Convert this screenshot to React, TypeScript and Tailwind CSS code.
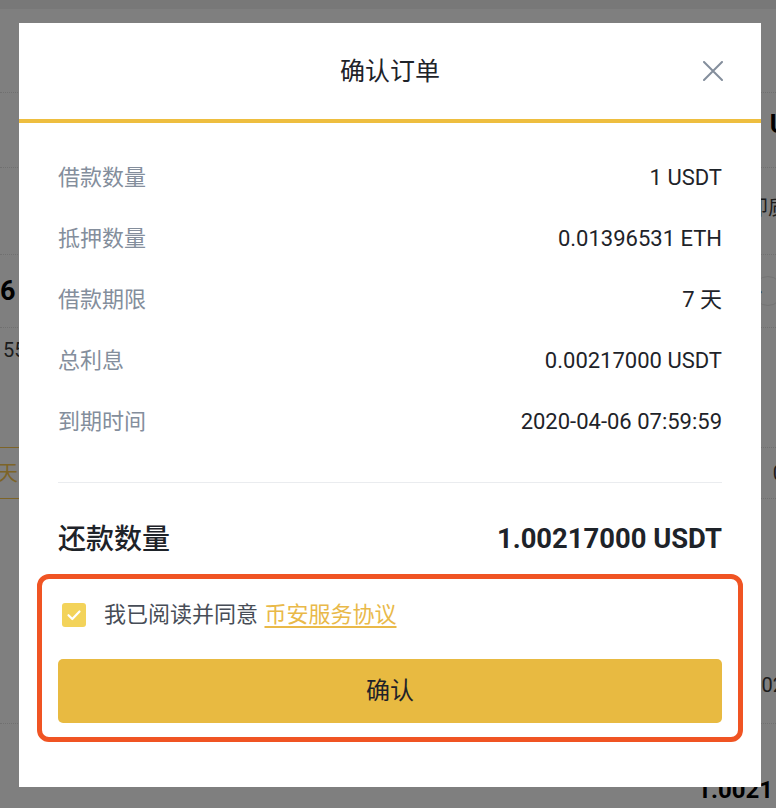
import React from "react";

const rows: { label: string; value: string }[] = [
  { label: "借款数量", value: "1 USDT" },
  { label: "抵押数量", value: "0.01396531 ETH" },
  { label: "借款期限", value: "7 天" },
  { label: "总利息", value: "0.00217000 USDT" },
  { label: "到期时间", value: "2020-04-06 07:59:59" },
];

function Background() {
  const line = "border-b border-dotted border-[#707070]";
  return (
    <div className="flex flex-col w-full">
      <div className="h-[9px] bg-[#787878]" />
      <div className={`h-[84px] ${line}`} />
      <div className={`h-[75px] ${line} flex items-center justify-end`}>
        <span className="text-[26px] font-bold text-black leading-none mr-[-11px] mt-[-12px]">U</span>
      </div>
      <div className={`h-[87px] ${line} flex items-center justify-end`}>
        <span className="text-[20px] text-[#1c1c1c] leading-none mr-[-12px] mt-[-6px]">即质</span>
      </div>
      <div className={`h-[73px] ${line} flex items-center justify-between`}>
        <span className="text-[27px] font-bold text-black leading-none ml-0">6</span>
        <div className="w-[30px] h-[30px] rounded-full border border-[#747474] mr-[-7px] flex items-center justify-start pl-[4px]">
          <span className="text-[14px] text-[#1a1a1a] leading-none">›</span>
        </div>
      </div>
      <div className="h-[119px] flex items-start justify-start">
        <span className="text-[20px] text-[#1c1c1c] leading-none ml-[3px] mt-[12px]">55</span>
      </div>
      <div className="h-[52px] border-y border-dotted border-[#707070] flex items-center justify-between">
        <div className="h-[52px] -my-px w-[40px] border-y border-[#7d6428] flex items-center">
          <span className="text-[21px] text-[#7d6428] leading-none ml-[-3px]">天</span>
        </div>
        <span className="text-[20px] text-[#1c1c1c] leading-none mr-[-8px]">0</span>
      </div>
      <div className={`h-[225px] ${line} flex items-end justify-end`}>
        <span className="text-[20px] text-[#1c1c1c] leading-none mr-[-8px] mb-[28px]">02</span>
      </div>
      <div className="h-[83px] flex items-start justify-end">
        <span className="text-[24px] font-bold text-black leading-none mr-[3px] mt-[54px]">1.0021</span>
      </div>
    </div>
  );
}

export default function App() {
  return (
    <div
      className="relative w-[776px] h-[808px] overflow-hidden bg-[#7f7f7f]"
      style={{ fontFamily: 'Roboto, "Noto Sans CJK SC", "Noto Sans", sans-serif' }}
    >
      <Background />

      <div className="absolute left-[19px] top-[23px] w-[742px] h-[764px] bg-white flex flex-col">
        <div className="h-[96px] grid grid-cols-[1fr_auto_1fr] items-center">
          <div />
          <div className="text-[25px] text-[#1e2329] leading-none">确认订单</div>
          <div className="flex justify-end pr-[38px]">
            <svg width="20" height="20" viewBox="0 0 20 20" fill="none">
              <path d="M1 1L19 19M19 1L1 19" stroke="#848e9c" strokeWidth="2" strokeLinecap="round" />
            </svg>
          </div>
        </div>
        <div className="h-[4px] bg-[#eebe3f]" />

        <div className="px-[39px] pt-[24px] flex flex-col">
          {rows.map((r) => (
            <div key={r.label} className="h-[61px] flex items-center justify-between">
              <span className="text-[22px] text-[#848e9c] leading-none">{r.label}</span>
              <span className="text-[22px] text-[#1e2329] leading-none">{r.value}</span>
            </div>
          ))}

          <div className="mt-[30px] h-px bg-[#eaecef]" />

          <div className="mt-[37px] h-[40px] flex items-center justify-between">
            <span className="text-[28px] font-medium text-[#1e2329] leading-none">还款数量</span>
            <span className="text-[27.4px] font-bold text-[#1e2329] leading-none">1.00217000 USDT</span>
          </div>

          <div className="mt-[14px] -mx-[21px] border-[5px] border-[#f05423] rounded-[12px] px-[16px] pt-[24px] pb-[14px] flex flex-col">
            <div className="h-[24px] flex items-center">
              <div className="ml-[4px] w-[24px] h-[24px] shrink-0 rounded-[3px] bg-[#f3d35a] flex items-center justify-center">
                <svg width="18" height="18" viewBox="0 0 18 18" fill="none">
                  <path d="M3.5 9.2L7.3 13L14.5 5.5" stroke="white" strokeWidth="2.2" strokeLinecap="round" strokeLinejoin="round" />
                </svg>
              </div>
              <span className="ml-[18px] text-[22px] text-[#474d57] leading-none whitespace-nowrap">
                我已阅读并同意{" "}
                <span className="ml-[1px] text-[#e9b949] underline underline-offset-[4px]">币安服务协议</span>
              </span>
            </div>
            <button className="mt-[32px] h-[64px] w-full rounded-[5px] bg-[#e8ba41] flex items-center justify-center text-[24px] text-[#1e2329] leading-none">
              确认
            </button>
          </div>
        </div>
      </div>
    </div>
  );
}
